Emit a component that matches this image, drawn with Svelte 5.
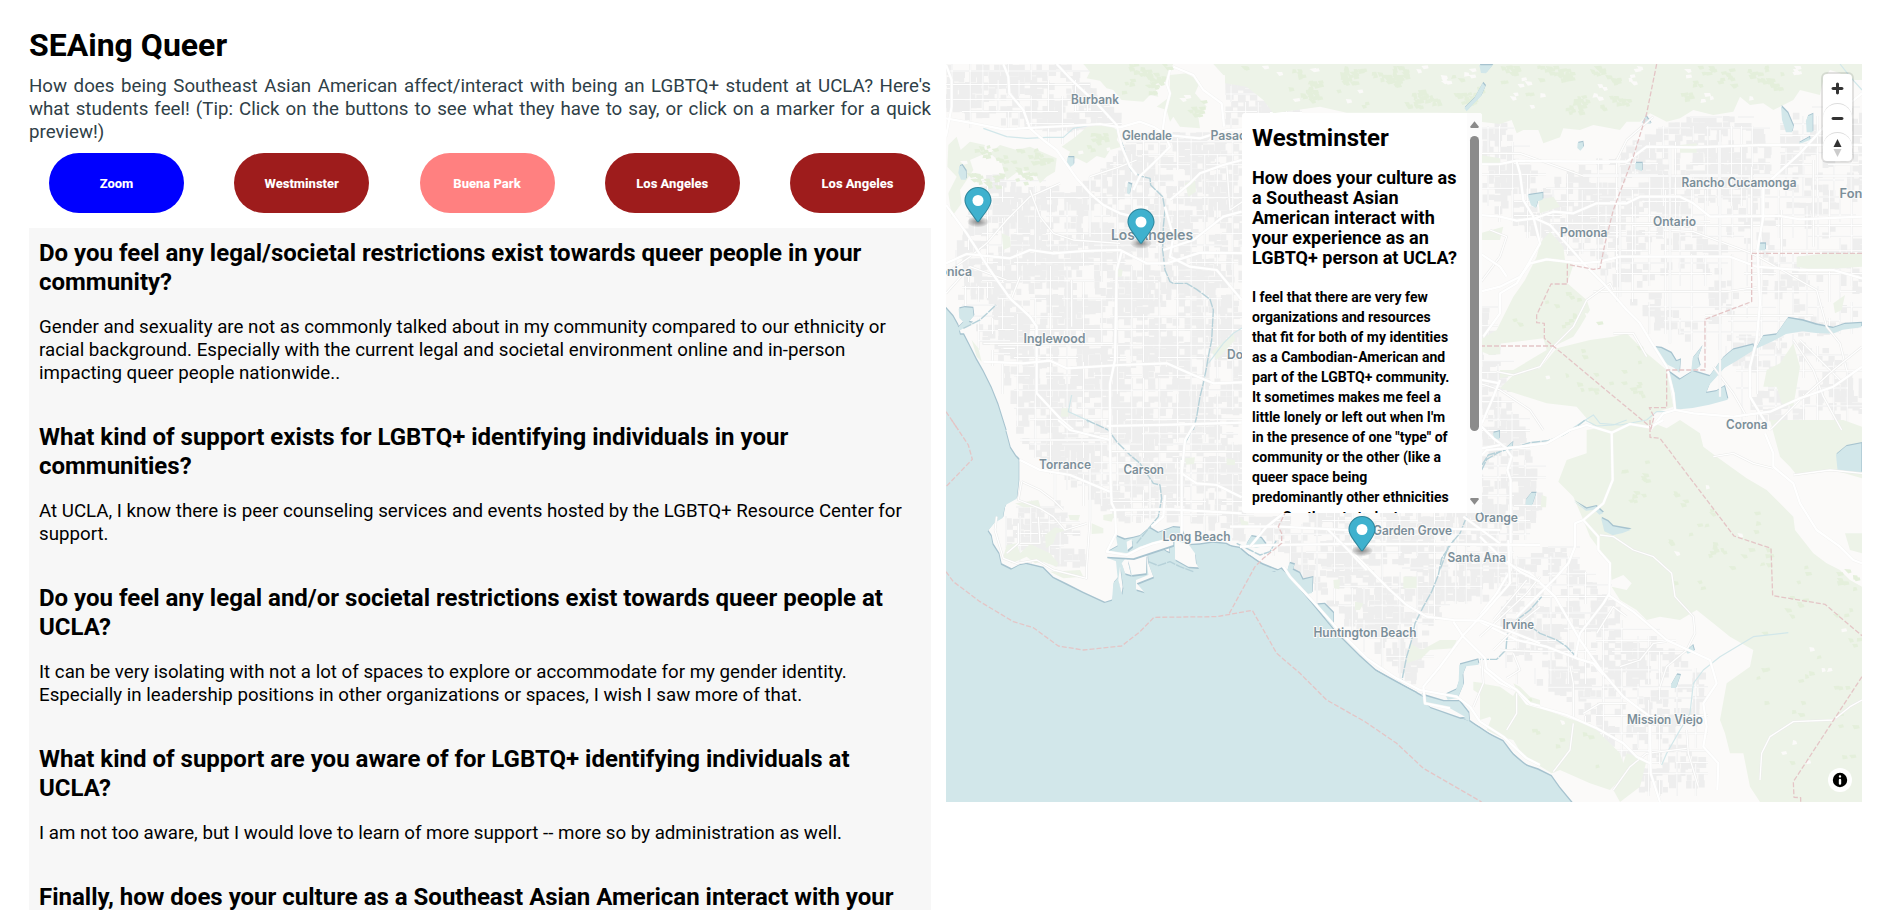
<script>
  const cities = [
    { name: 'Zoom', tone: 'zoom' },
    { name: 'Westminster', tone: 'dark' },
    { name: 'Buena Park', tone: 'light' },
    { name: 'Los Angeles', tone: 'dark' },
    { name: 'Los Angeles', tone: 'dark' }
  ];

  const answers = [
    {
      q: 'Do you feel any legal/societal restrictions exist towards queer people in your community?',
      a: 'Gender and sexuality are not as commonly talked about in my community compared to our ethnicity or racial background. Especially with the current legal and societal environment online and in-person impacting queer people nationwide..'
    },
    {
      q: 'What kind of support exists for LGBTQ+ identifying individuals in your communities?',
      a: 'At UCLA, I know there is peer counseling services and events hosted by the LGBTQ+ Resource Center for support.'
    },
    {
      q: 'Do you feel any legal and/or societal restrictions exist towards queer people at UCLA?',
      a: 'It can be very isolating with not a lot of spaces to explore or accommodate for my gender identity. Especially in leadership positions in other organizations or spaces, I wish I saw more of that.'
    },
    {
      q: 'What kind of support are you aware of for LGBTQ+ identifying individuals at UCLA?',
      a: 'I am not too aware, but I would love to learn of more support -- more so by administration as well.'
    },
    {
      q: 'Finally, how does your culture as a Southeast Asian American interact with your experience as an LGBTQ+ person at UCLA?',
      a: ''
    }
  ];

  const labels = [
    ['Burbank', 1071, 103.6, 48],
    ['Glendale', 1122, 140.2, 50],
    ['Pasadena', 1210.5, 139.6, 58],
    ['Los Angeles', 1111, 240.2, 82],
    ['Santa Monica', 891, 275.5, 81],
    ['Inglewood', 1023.5, 342.7, 62],
    ['Downey', 1227, 359, 47],
    ['Torrance', 1039, 468.9, 52],
    ['Carson', 1123.5, 474.2, 40.5],
    ['Long Beach', 1162.5, 541.2, 68],
    ['Garden Grove', 1373, 535.2, 79],
    ['Orange', 1475, 522, 43],
    ['Santa Ana', 1447.5, 561.9, 58.5],
    ['Irvine', 1502.5, 629.2, 31.5],
    ['Huntington Beach', 1313.5, 637.2, 103],
    ['Mission Viejo', 1627, 723.5, 76],
    ['Corona', 1726, 428.7, 41.5],
    ['Ontario', 1653, 226.3, 43],
    ['Pomona', 1560, 237.3, 47.5],
    ['Rancho Cucamonga', 1681.5, 186.7, 115],
    ['Fontana', 1839.5, 198.3, 50]
  ];

  const markers = [[978, 187], [1141, 208.5], [1362, 516]];

  // Built-up areas, each with the share of its cells that is filled.
  const urban = [
    [0.72, [[946, 64], [1070, 64], [1120, 118], [1100, 130], [1040, 130], [1000, 118], [946, 110]]],
    [0.7, [[985, 170], [1070, 190], [1110, 155], [1140, 130], [1242, 130], [1300, 90], [1242, 300], [1242, 540], [1200, 520], [1120, 520], [1020, 440], [1000, 370], [990, 300], [950, 250]]],
    [0.75, [[1225, 70], [1245, 75], [1276, 110], [1225, 124]]],
    [0.66, [[1482, 125], [1500, 120], [1540, 180], [1660, 125], [1700, 110], [1760, 120], [1770, 180], [1760, 200], [1690, 195], [1650, 240], [1620, 260], [1560, 250], [1482, 200]]],
    [0.5, [[1780, 110], [1862, 100], [1862, 185], [1780, 185]]],
    [0.24, [[1600, 190], [1862, 190], [1862, 330], [1720, 340], [1660, 330], [1600, 270]]],
    [0.72, [[1242, 510], [1300, 513], [1482, 300], [1520, 430], [1540, 500], [1500, 570], [1480, 600], [1440, 600], [1410, 680], [1330, 610]]],
    [0.45, [[1500, 560], [1560, 540], [1610, 600], [1700, 670], [1700, 780], [1640, 790], [1570, 700], [1500, 660]]],
    [0.66, [[1000, 515], [1030, 500], [1060, 500], [1085, 560], [1060, 563], [1005, 545]]],
    [0.35, [[1720, 330], [1800, 340], [1862, 360], [1862, 420], [1740, 420]]],
    [0.3, [[946, 270], [985, 280], [1010, 360], [990, 360], [958, 320]]]
  ];

  // Hill country, speckled with denser wood and bare clearings.
  const hills = [
    [0.7, [[1100, 64], [1170, 64], [1150, 95], [1110, 90]]],
    [0.6, [[1170, 80], [1200, 85], [1200, 120], [1180, 120]]],
    [0.6, [[1070, 135], [1110, 130], [1115, 150], [1080, 158]]],
    [0.5, [[950, 140], [1050, 150], [1040, 180], [960, 190]]],
    [0.8, [[1240, 66], [1480, 66], [1640, 66], [1620, 112], [1540, 118], [1482, 108], [1300, 108]]],
    [0.6, [[1660, 66], [1810, 66], [1780, 95], [1680, 108]]],
    [0.12, [[1620, 450], [1660, 440], [1860, 580], [1860, 790], [1760, 780], [1750, 640], [1620, 560]]],
    [0.2, [[1500, 330], [1550, 280], [1640, 340], [1660, 400], [1560, 400]]],
    [0.3, [[1510, 690], [1590, 730], [1600, 770], [1540, 750]]]
  ];

  function inside(x, y, poly) {
    let hit = false;
    for (let i = 0, j = poly.length - 1; i < poly.length; j = i++) {
      const [xi, yi] = poly[i];
      const [xj, yj] = poly[j];
      if (yi > y !== yj > y && x < ((xj - xi) * (y - yi)) / (yj - yi) + xi) hit = !hit;
    }
    return hit;
  }

  let seed = 41;
  function rand() {
    seed = (seed * 16807) % 2147483647;
    return seed / 2147483647;
  }

  function box(poly) {
    const xs = poly.map((p) => p[0]);
    const ys = poly.map((p) => p[1]);
    return [Math.min(...xs), Math.max(...xs), Math.min(...ys), Math.max(...ys)];
  }

  let blocks = '';
  let streets = '';
  for (const [density, poly] of urban) {
    const [left, right, top, bottom] = box(poly);
    for (let y = top; y < bottom; y += 6) {
      for (let x = left; x < right; x += 6) {
        if (!inside(x, y, poly)) continue;
        const drift = 0.42 * Math.sin(x / 17 + y / 41) * Math.cos(y / 14 - x / 37);
        if (rand() < density + drift) {
          const w = 5 + rand() * 3;
          const h = 5 + rand() * 3;
          blocks += `M${(x + rand()).toFixed(1)} ${(y + rand()).toFixed(1)}h${w.toFixed(1)}v${h.toFixed(1)}h-${w.toFixed(1)}z`;
        }
      }
    }
    for (let y = top + 7; y < bottom; y += 10 + rand() * 9) {
      for (let x = left; x < right; x += 16) {
        if (inside(x, y, poly) && rand() < 0.8) streets += `M${x} ${y.toFixed(1)}h16`;
      }
    }
    for (let x = left + 6; x < right; x += 10 + rand() * 9) {
      for (let y = top; y < bottom; y += 16) {
        if (inside(x, y, poly) && rand() < 0.8) streets += `M${x.toFixed(1)} ${y}v16`;
      }
    }
  }

  let woods = '';
  let clearings = '';
  for (const [cover, poly] of hills) {
    const [left, right, top, bottom] = box(poly);
    for (let y = top; y < bottom; y += 3) {
      for (let x = left; x < right; x += 4) {
        if (!inside(x, y, poly)) continue;
        const n =
          0.6 * Math.sin(x / 13 + 2 * Math.sin(y / 17)) * Math.cos(y / 9 - Math.sin(x / 23) * 2) +
          0.4 * Math.sin(x / 5 - y / 8) * Math.cos(y / 4 + x / 31);
        const cell = `M${(x + rand() * 2).toFixed(1)} ${y.toFixed(1)}l${(3 + rand() * 4).toFixed(1)} ${(rand() * 2 - 1).toFixed(1)}l1 3l-${(3 + rand() * 3).toFixed(1)} 1z`;
        if (n > 0.3 && rand() < cover) woods += cell;
        else if (n < -0.62 && rand() < cover * 0.5) clearings += cell;
      }
    }
  }

  // Map sheets: an origin and the shapes drawn on it at three units to the pixel.
  const sheets = [
    {
      x: 940, y: 50,
      parks: [
        '430,42 700,42 690,60 675,95 640,100 655,140 630,135 610,155 545,150 520,120 500,115 480,92 440,85 450,65',
        '690,75 740,70 780,95 765,130 800,170 775,200 780,235 720,230 700,200 690,215 680,180 650,170 690,140',
        '405,262 440,232 500,222 540,245 530,270 545,290 510,300 495,325 470,318 440,340 410,325 380,330 390,305 365,290',
        '820,42 960,42 960,90 920,110 890,80 850,75',
        '25,285 50,260 62,300 90,275 135,285 125,315 90,330 100,360 60,420 65,460 35,500 25,430 50,380 22,350',
        '150,310 180,285 230,300 270,290 350,325 345,365 320,380 300,400 285,370 240,360 200,390 185,340',
        '735,400 765,390 768,425 745,440', '185,550 210,560 212,590 190,600', '530,655 548,660 545,680 528,680',
        '95,870 115,895 125,935 110,920', '365,1075 385,1075 385,1100 362,1100', '815,905 880,850 885,870 830,930'
      ],
      water: [
        '18,770 40,795 55,822 62,850 72,850 90,885 110,925 130,960 155,1010 175,1060 200,1140 18,1140',
        '58,772 75,768 100,770 103,795 88,812 100,815 60,838 52,832 72,812 60,800',
        '60,345 68,342 80,360 80,385 65,385 57,365', '385,318 403,318 403,340 388,350 383,335', '565,395 577,400 570,430 563,425'
      ],
      rivers: [
        '530,235 540,265 550,290 565,345 575,362 600,378 630,385 632,405 668,440 675,480 670,530 668,600 675,660 690,695 700,700 740,700 770,718 810,748 820,780 815,870 805,920 800,950 790,1000 780,1040 770,1100 760,1140',
        '70,835 120,810 168,765'
      ],
      creeks: ['130,235 200,260 260,265 320,262 370,262 400,235 440,228', '395,1035 385,1085 440,1110 445,1118', '930,820 880,850 850,880 805,940'],
      highways: [
        '190,42 205,80 208,130 250,180 270,235 310,270 350,300 410,385 450,430 490,465 540,490 600,505',
        '350,42 400,95 470,160 530,225 545,290 570,350 590,375',
        '18,205 100,220 190,238 380,228 480,222 540,232 600,215 640,230 680,255 780,265 860,240 960,235',
        '690,60 680,100 690,130 675,190 668,240 690,290 640,340 600,378 580,420',
        '700,50 760,75 790,120 845,160 852,230',
        '18,45 35,90 35,170 18,260',
        '18,640 80,612 160,620 210,625 270,600 340,610 430,603 540,600 620,640 680,640 780,608 960,610',
        '18,465 80,550 150,660 210,745 270,800 290,830 290,1030 365,1110 400,1140',
        '545,605 530,660 525,930 510,1000 510,1140',
        '130,935 250,940 330,932 380,955 540,945 680,940 760,975 820,1000 960,995',
        '675,470 700,560 690,620 750,650 830,660 880,720 905,750',
        '690,450 750,400 780,370 850,345 905,330', '670,600 760,570 850,500 905,485'
      ],
      lanes: [
        '18,670 90,620 140,580 200,510 270,440 360,400', '270,420 300,500 340,550 400,570 540,580', '450,380 450,560', '450,380 540,350 590,330', '395,690 395,830', '18,730 90,650 200,690',
        '130,880 520,880', '190,895 225,895', '240,680 215,745', '860,340 870,480 960,420'
      ]
    },
    {
      x: 940, y: 420,
      parks: [
        '200,375 230,370 240,400 270,372 330,400 355,430 350,440 310,425 285,430 260,410 215,430 190,410',
        '345,322 315,345 318,385 340,370 350,340 380,330', '455,310 490,325 490,340 455,342', '490,285 525,280 515,305 490,300',
        '225,250 295,240 302,262 250,262', '330,455 420,450 430,470 370,475', '735,115 765,112 762,132 738,134', '860,115 885,120 885,135 860,135',
        '385,285 420,285 415,302 390,300', '900,300 925,305 925,320 905,318'
      ],
      water: [
        '0,-30 178,-30 188,0 200,35 212,80 228,105 238,115 238,180 232,232 200,250 195,262 190,290 165,305 145,330 155,345 160,370 178,398 185,430 215,445 240,432 260,428 310,440 340,470 380,490 430,515 495,545 518,538 522,485 535,470 530,420 505,410 508,390 535,375 530,345 555,355 580,350 600,345 630,320 655,335 700,318 725,320 745,372 780,370 820,364 860,368 900,390 935,408 960,425 960,1146 0,1146'
      ],
      land: [
        '560,365 575,358 577,378 562,390',
        '600,390 685,368 688,395 680,392 660,378 622,400 625,430 640,470 590,490 612,515 588,508 588,480 625,465 620,420 600,405 570,410 565,430 573,465 555,460 545,430 560,410',
        '560,410 600,398 620,405 618,460 575,465 570,440',
        '705,362 745,372 765,400 768,430 775,442 745,440 705,418', '540,440 548,500 545,520 535,480', '500,395 570,400 600,380 700,355 700,375 580,415 500,410'
      ],
      rivers: ['765,10 735,70 725,130 725,330', '440,0 505,30 530,65 570,105 600,130 640,190 660,195 665,235 655,290 610,345 590,370', '625,425 655,437 690,425 720,440 760,455'],
      creeks: [],
      highways: [
        '510,0 510,60 512,190 515,250 525,270 528,340 500,395 560,405 600,385 640,370 700,355',
        '355,0 390,30 510,60', '500,18 700,14 905,8',
        '765,10 735,60 725,160 770,190 830,195 905,232', '725,120 725,340',
        '240,120 300,150 390,165 510,215', '510,270 690,268 905,280', '675,225 670,290 635,320'
      ],
      lanes: [
        '245,185 300,210 340,240 370,270', '170,290 165,330 190,415 230,430 290,420 340,450 440,475 440,440 450,300', '245,185 235,240 300,265 340,290 375,330 440,310',
        '450,100 450,300', '345,160 345,240', '240,60 500,60', '235,310 235,370 200,400', '295,290 300,370 240,370', '630,300 630,180', '510,95 900,95'
      ]
    },
    {
      x: 1480, y: 50,
      parks: [
        '-765,42 1146,42 1146,90 1110,90 1080,70 1050,60 1030,90 1020,135 960,120 940,150 880,180 850,160 810,165 780,140 760,185 700,195 640,180 600,205 560,215 510,190 480,215 440,215 420,240 340,225 300,240 250,235 240,262 190,280 175,240 130,240 110,250 95,210 60,222 0,215 0,190 -130,188 -400,188 -480,170 -620,190 -650,150 -700,110 -765,100',
        '210,545 250,590 255,630 280,645 262,700 320,750 330,780 300,830 280,860 240,880 220,890 170,960 60,985 60,960 100,960 200,900 190,865 0,888 0,870 50,840 100,740 135,690 170,620 180,580',
        '400,860 440,850 500,910 560,960 580,1070 520,1090 510,1140 350,1140 290,1070 200,1060 60,1015 100,975 180,955 230,895 330,870',
        '950,620 1040,610 1146,610 1146,650 1000,660 950,650', '900,940 940,880 960,950 940,1070 905,1060 890,1010 850,1010 860,960',
        '175,450 220,440 240,470 180,490', '0,550 70,530 60,570 0,570', '600,285 650,280 650,308 600,308', '1060,760 1095,735 1085,780 1065,790',
        '0,315 60,325 60,340 0,345'
      ],
      water: [
        '525,888 545,890 575,905 590,930 603,925 600,965 585,950 565,940 545,920', '635,965 640,920 668,885 655,920 662,945',
        '565,960 600,985 640,960 690,975 730,920 760,895 820,880 825,895 770,930 735,950 690,1000 680,1025 710,1020 735,1005 745,1045 690,1060 640,1070 585,1075 580,1030',
        '830,892 850,855 890,850 925,800 970,808 1010,820 1060,830 1095,818 1146,815 1146,828 1090,835 1060,847 1010,845 970,840 920,848 880,870',
        '905,165 925,185 942,225 938,243 920,243 908,205', '985,195 1000,188 1000,243 982,243 980,210', '958,275 990,257 992,266 960,278',
        '295,275 310,272 312,288 303,298 294,290', '145,432 190,425 190,445 175,450 170,470 155,462', '468,335 488,335 488,360 468,352',
        '840,577 858,577 858,597 840,597', '487,215 500,195 515,218', '0,42 40,42 20,66 5,65', '-45,170 -15,140 10,95 18,105 5,135 -20,160 -38,180'
      ],
      rivers: [],
      creeks: ['1080,42 1110,80 1146,120', '280,1133 340,1095 360,1120 420,1125 500,1110 530,1085 575,1085'],
      highways: [
        '0,343 60,342 110,332 250,334 440,335 500,290 640,292 840,285 1146,285',
        '0,495 60,500 110,512 165,505 220,485 280,490 350,460 440,460 480,440 600,440 640,460 690,500 900,498 960,508 1146,500',
        '110,335 120,370 130,450 160,500 180,580 140,650 110,700 60,730 60,790 10,860',
        '0,725 60,710 120,680 150,640 200,628 300,640 360,635 420,620 750,620 830,650 960,660 1060,660 1146,685',
        '165,505 210,525 320,650 370,700 440,780 480,820 510,870 560,950 580,1030 585,1080 640,1090 760,1100',
        '1146,130 1060,200 960,310 850,410 850,500 832,600 840,760 830,870 810,950 810,1040 840,1090 870,1140',
        '760,1100 870,1085 960,1045 1060,1010 1146,950', '0,610 60,650 80,680', '510,1140 550,1090 585,1080'
      ],
      lanes: [
        '0,310 120,310 310,378 815,378 1146,378', '550,540 640,545 815,610 870,640 1010,720 1040,830 1080,880 1100,960', '420,350 420,740', '570,290 570,880', '210,520 520,520 690,515',
        '340,725 740,725 830,712', '675,797 830,797 1000,797', '815,350 815,610', '1000,330 1000,590', '0,700 60,620 80,560 30,540', '320,750 280,830 220,890 180,950 100,975 50,965',
        '905,480 905,620', '940,870 1000,960 1030,1040 1085,1140', '960,870 1080,990', '700,950 760,1030 800,1100', '870,1140 960,1050 1060,960 1146,890', '520,200 440,270 410,330',
        '320,750 390,700 400,720', '400,850 460,850 500,920', '0,1000 60,1020 150,1080 190,1140', '720,240 720,1040'
      ]
    },
    {
      x: 1480, y: 420,
      parks: [
        '320,30 380,20 440,30 510,5 560,25 600,0 660,40 670,80 710,110 800,175 860,210 940,290 945,330 1000,400 1040,430 1080,450 1110,480 1146,500 1146,1146 840,1146 810,1100 800,1050 790,1000 750,1000 735,940 720,900 740,790 810,740 820,690 750,650 700,610 650,570 600,600 540,590 500,600 470,570 420,540 395,500 440,510 455,490 430,465 395,480 390,430 360,390 330,350 310,300 280,230 235,185 260,120 320,100',
        '870,0 1090,0 1146,20 1146,175 1060,150 950,165 930,140 900,110',
        '0,790 60,800 130,850 200,870 280,900 330,910 380,960 420,1000 440,1060 390,1110 330,1090 240,1050 215,1060 150,1020 120,1000 110,920 60,930 30,890 0,900',
        '440,1000 500,1020 480,1100 420,1146 400,1110', '185,225 200,230 198,262 182,262', '1095,340 1146,340 1146,400 1110,390'
      ],
      water: [
        '0,920 60,960 95,995 130,1030 175,1045 215,1065 240,1100 278,1146 -900,1146 -900,700 -400,700',
        '365,290 385,300 400,315 455,325 430,335 400,342 375,330', '282,240 320,262 350,255 372,275 360,280 345,265 320,268',
        '1070,100 1100,75 1146,66 1146,155 1100,153 1075,150', '140,235 155,215 170,215 158,252 138,250', '575,790 592,760 603,762 590,800 575,800',
        '620,690 640,672 645,690 625,697', '42,35 58,35 60,50 45,52', '80,80 100,62 98,85 84,90'
      ],
      rivers: ['5,150 20,118 60,95 110,80 150,68 205,62 250,45 290,20 315,0', '110,600 150,570 185,530', '125,600 180,640 230,660 260,680 290,712', '0,718 50,718 78,690 82,640'],
      creeks: ['315,0 350,18 400,15 440,0', '925,638 820,650 770,680 720,710 670,750 640,790 630,880 600,930 560,1000 545,1035'],
      highways: [
        '0,110 20,90 80,85 200,70 270,30 320,15 395,38 450,12 510,22 550,0',
        '395,35 398,180 370,250 310,300 285,310 285,380 265,430 230,470 190,510 110,590',
        '310,300 355,350 355,390 390,430 388,520 370,550 300,640 285,715',
        '80,90 95,110 82,150 92,180 92,450 50,520 0,585', '0,350 80,430 150,460 225,530 300,660 370,760 430,830 510,890 512,1060 540,1146',
        '385,525 460,575 560,660 690,720 710,790 670,850 680,920 670,980 715,1030 712,1110',
        '0,605 110,660 200,680 290,715 340,730 370,765', '0,740 60,790 110,810 140,850 260,885 350,925 430,970 470,1010 510,1030',
        '855,40 880,100 880,140 940,190 960,250 1010,330 1080,380 1120,420 1146,430', '0,15 40,55 80,85'
      ],
      lanes: [
        '360,345 400,350 460,390 520,410 575,460 585,530 640,590 645,640 620,690', '840,1080 845,1000 870,950 940,905 1060,900 1110,860 1146,840',
        '700,110 760,100 820,130 880,145', '940,165 1050,150 1146,160', '310,880 360,850 440,850', '350,640 400,560 440,590', '420,740 480,720 520,670 560,665',
        '540,800 560,740 620,690', '280,900 280,790 270,740', '220,1055 270,990 280,910', '620,930 625,1000 655,1100', '400,1110 450,1040 500,1000 620,985'
      ]
    },
    {
      x: 1240, y: 540,
      parks: ['490,110 530,110 530,145 490,145', '510,310 545,330 600,300 650,300 640,325 570,330 545,355 500,370', '700,425 735,430 730,470 700,450', '345,185 370,190 360,210 345,210', '280,120 300,118 298,148 282,145', '820,430 840,440 870,470 900,480 900,680 850,650 820,600 780,590 740,570 760,520 800,500 830,450'],
      water: ['0,35 30,45 60,68 85,85 105,92 125,82 145,100 220,190 290,275 360,345 410,390 470,425 530,455 545,480 560,497 620,515 690,540 740,575 790,600 820,640 850,665 870,680 900,690 900,786 -400,786 -400,200 0,200',
        '232,190 255,188 282,215 282,258 265,240', '140,100 150,65 165,70 160,85 180,95 190,115 220,108 218,155 205,158 180,130 160,118',
        '618,460 650,445 658,420 660,370 715,355 718,370 680,375 670,400 672,430 655,470 625,475', '545,460 612,480 660,480 688,515 690,540 620,510 575,492'
      ],
      land: ['560,490 630,505 675,530 660,532 570,500'],
      rivers: ['642,0 605,55 595,105 575,155 550,200 525,250 515,300 500,350 485,425', '-10,10 30,30 60,45 90,35 110,0'],
      creeks: [],
      highways: [
        '290,0 340,40 400,100 450,150 500,195 560,230 640,240 725,242 800,270 900,310', '640,245 670,290 735,355 740,385 790,425 830,450 870,490 900,498',
        '670,285 600,380 550,440 555,490 630,505', '130,80 150,110 220,185 300,275 380,355 470,415 540,450 650,470 690,500 720,545 790,590 860,655 900,675',
        '670,285 740,210 810,130 805,0', '0,20 90,15 300,12 560,12 900,15', '800,65 840,95 900,125'
      ],
      lanes: ['725,355 730,430 700,500', '820,340 840,390 800,415', '720,290 860,160 900,110', '760,240 860,120', '780,330 900,335', '830,460 830,520 800,570', '760,330 850,240 900,200']
    },
    {
      x: 1230, y: 330,
      parks: ['756,30 810,30 810,72 780,75 756,65', '30,560 60,590 40,595'],
      water: ['50,640 65,615 95,620 110,640 100,645 80,650', '790,305 810,300 810,325 795,320', '0,645 30,650 70,685 100,700 150,720 0,720'],
      rivers: ['710,560 690,610 655,650 630,720', '756,405 775,375 810,365'],
      creeks: [],
      highways: ['0,590 150,590 350,600 600,595 810,600', '290,595 340,645 410,720', '60,650 110,590 160,550', '700,560 810,640', '756,355 810,345', '756,150 810,160', '756,280 790,200 810,150']
    }
  ];

  const borders = [
    [1480, 50, '530,42 500,190 460,320 400,480 375,580 360,655 340,658 262,643 262,702 213,702 170,795 170,818 193,820 193,865 222,890 510,1130'],
    [1480, 50, '0,888 222,888'],
    [1480, 50, '1146,610 815,610 815,755 675,808 675,960 560,960 560,1073 508,1073 522,1100 512,1140'],
    [1480, 420, '510,0 510,52 540,55 650,200 762,348 873,385 878,527 1035,553 1146,647'],
    [1480, 420, '1146,770 940,1085 942,1132 962,1133 962,1146'],
    [940, 50, '18,1085 55,1140'],
    [940, 420, '35,0 85,75 97,118 18,200'],
    [940, 420, '18,455 40,485 120,545 220,605 280,623 355,678 430,690 545,678 600,635 642,592 830,590 937,571 1010,700 1080,760 1160,840 1275,905 1370,970 1450,1045 1625,1146'],
    [940, 420, '868,580 945,440 970,415 1025,370 1025,340 1015,320 1035,280']
  ];
</script>

<main>
  <section class="story">
    <h1>SEAing Queer</h1>
    <p class="intro">
      How does being Southeast Asian American affect/interact with being an LGBTQ+ student at UCLA? Here's what students feel! (Tip: Click on the buttons to see what they have to say, or click on a marker for a quick preview!)
    </p>
    <nav>
      {#each cities as city}
        <button class="city {city.tone}">{city.name}</button>
      {/each}
    </nav>
    <div class="answers">
      {#each answers as item}
        <h2>{item.q}</h2>
        <p>{item.a}</p>
      {/each}
    </div>
  </section>

  <section class="map">
    <svg class="canvas" viewBox="946 64 916 738" width="916" height="738" aria-hidden="true">
      <rect x="946" y="64" width="916" height="738" fill="#fbfaf9" />
      <path class="blocks" d={blocks} />
      <path class="street-edge" d={streets} />
      <path class="street" d={streets} />
      {#each sheets as s}
        <g transform="translate({s.x} {s.y}) scale(0.33333)">
          {#each s.parks as p}<polygon class="park" points={p} />{/each}
        </g>
      {/each}
      <path class="woods" d={woods} />
      <path class="land" d={clearings} />
      {#each sheets as s}
        <g transform="translate({s.x} {s.y}) scale(0.33333)">
          {#each s.water as p}<polygon class="shore" points={p} />{/each}
        </g>
      {/each}
      {#each sheets as s}
        <g transform="translate({s.x} {s.y}) scale(0.33333)">
          {#each s.water as p}<polygon class="water" points={p} transform="translate(-2 4)" />{/each}
        </g>
      {/each}
      {#each sheets as s}
        <g transform="translate({s.x} {s.y}) scale(0.33333)">
          {#each s.land ?? [] as p}
            <polygon class="shore" points={p} transform="translate(2 5)" />
            <polygon class="land" points={p} />
          {/each}
          {#each s.creeks as p}<polyline class="creek" points={p} />{/each}
          {#each s.rivers as p}<polyline class="river" points={p} />{/each}
        </g>
      {/each}
      {#each sheets as s}
        <g transform="translate({s.x} {s.y}) scale(0.33333)">
          {#each s.lanes ?? [] as p}
            <polyline class="lane-edge" points={p} />
            <polyline class="lane" points={p} />
          {/each}
          {#each s.highways as p}<polyline class="highway-edge" points={p} />{/each}
          {#each s.highways as p}<polyline class="highway" points={p} />{/each}
        </g>
      {/each}
      {#each borders as [x, y, p]}
        <polyline class="border" points={p} transform="translate({x} {y}) scale(0.33333)" />
      {/each}
      {#each labels as [name, x, y, w]}
        <text {x} {y} textLength={w} lengthAdjust="spacingAndGlyphs" class:major={name === 'Los Angeles'}>{name}</text>
      {/each}
      <defs>
        <radialGradient id="pin-shadow">
          <stop offset="10%" stop-opacity="0.4" />
          <stop offset="100%" stop-opacity="0.05" />
        </radialGradient>
      </defs>
      {#each markers as [x, y]}
        <g transform="translate({x - 13.5} {y})">
          <ellipse cx="13.5" cy="34.8" rx="10.5" ry="5.25" fill="url(#pin-shadow)" />
          <path fill="#3fb1ce" d="M27,13.5C27,19.07 20.25,27 14.75,34.5C14.02,35.5 12.98,35.5 12.25,34.5C6.75,27 0,19.22 0,13.5C0,6.04 6.04,0 13.5,0C20.96,0 27,6.04 27,13.5Z" />
          <path opacity="0.25" d="M13.5,0C6.04,0 0,6.04 0,13.5C0,19.22 6.75,27 12.25,34.5C13,35.52 14.02,35.5 14.75,34.5C20.25,27 27,19.07 27,13.5C27,6.04 20.96,0 13.5,0ZM13.5,1C20.42,1 26,6.58 26,13.5C26,15.9 24.5,19.18 22.22,22.74C19.95,26.3 16.71,30.14 13.94,33.91C13.74,34.18 13.61,34.32 13.5,34.44C13.39,34.32 13.26,34.18 13.06,33.91C10.28,30.13 7.41,26.31 5.02,22.77C2.62,19.23 1,15.95 1,13.5C1,6.58 6.58,1 13.5,1Z" />
          <circle fill="white" cx="13.5" cy="13.5" r="5.5" />
        </g>
      {/each}
    </svg>

    <div class="popup">
      <div class="popup-text">
        <h3>Westminster</h3>
        <h4>How does your culture as a Southeast Asian American interact with your experience as an LGBTQ+ person at UCLA?</h4>
        <p>I feel that there are very few organizations and resources that fit for both of my identities as a Cambodian-American and part of the LGBTQ+ community. It sometimes makes me feel a little lonely or left out when I'm in the presence of one "type" of community or the other (like a queer space being predominantly other ethnicities over Southeast students</p>
      </div>
      <div class="scrollbar">
        <svg width="9" height="7" viewBox="0 0 9 7"><path d="M4.5 0.2 8.7 5.6Q8.9 7 8 7H1Q0.1 7 0.3 5.6Z" fill="#8b8b8b" /></svg>
        <div class="thumb"></div>
        <svg class="down" width="9" height="7" viewBox="0 0 9 7"><path d="M4.5 6.8 8.7 1.4Q8.9 0 8 0H1Q0.1 0 0.3 1.4Z" fill="#8b8b8b" /></svg>
      </div>
    </div>

    <div class="controls">
      <button aria-label="Zoom in"><svg viewBox="0 0 29 29"><path fill="#333" d="M14.5 8.5c-.75 0-1.5.75-1.5 1.5v3h-3c-.75 0-1.5.75-1.5 1.5S9.25 16 10 16h3v3c0 .75.75 1.5 1.5 1.5S16 19.75 16 19v-3h3c.75 0 1.5-.75 1.5-1.5S19.75 13 19 13h-3v-3c0-.75-.75-1.5-1.5-1.5z" /></svg></button>
      <button aria-label="Zoom out"><svg viewBox="0 0 29 29"><path fill="#333" d="M10 13c-.75 0-1.5.75-1.5 1.5S9.25 16 10 16h9c.75 0 1.5-.75 1.5-1.5S19.75 13 19 13h-9z" /></svg></button>
      <button aria-label="Reset bearing to north"><svg viewBox="0 0 29 29"><path fill="#333" d="M10.5 14l4-8 4 8h-8z" /><path fill="#ccc" d="M10.5 16l4 8 4-8h-8z" /></svg></button>
    </div>
    <button class="info" aria-label="Toggle attribution">
      <svg width="24" height="24" viewBox="0 0 20 20" fill-rule="evenodd"><path d="M4 10a6 6 0 1 0 12 0 6 6 0 1 0-12 0m5-3a1 1 0 1 0 2 0 1 1 0 1 0-2 0m0 3a1 1 0 1 1 2 0v3a1 1 0 1 1-2 0" /></svg>
    </button>
  </section>
</main>

<style>
  :global(body) {
    overflow: hidden;
  }
  main {
    box-sizing: border-box;
    display: grid;
    grid-template-columns: 902px 916px;
    column-gap: 15px;
    height: 910px;
    padding-left: 29px;
    overflow: hidden;
    background: #fff;
    font-family: Roboto, sans-serif;
    color: #000;
  }
  .story {
    display: flex;
    flex-direction: column;
    padding-top: 26px;
  }
  h1 {
    margin: 0;
    font-size: 32px;
    line-height: 38px;
  }
  .intro {
    margin: 11px 0 9px;
    font-size: 18.72px;
    line-height: 23px;
    text-align: justify;
    color: #2f4047;
  }
  nav {
    display: flex;
    justify-content: space-between;
    padding: 0 6px 0 20px;
  }
  .city {
    width: 135px;
    height: 60px;
    padding: 0;
    border: 0;
    border-radius: 30px;
    font: 800 13px Roboto, sans-serif;
    color: #fff;
  }
  .zoom { background: #00f; }
  .dark { background: #9e1c1c; }
  .light { background: #ff8080; }
  .answers {
    margin-top: 15px;
    padding: 11px 10px 10px;
    background: #f7f7f7;
  }
  h2 {
    margin: 0 0 19px;
    font-size: 24px;
    line-height: 29px;
  }
  .answers p {
    margin: 0 0 38px;
    font-size: 18.72px;
    line-height: 23px;
  }
  .map {
    position: relative;
    margin-top: 64px;
    width: 916px;
    height: 738px;
    overflow: hidden;
  }
  .canvas {
    display: block;
  }
  .park { fill: #edf3e8; }
  .woods { fill: #e4efdb; }
  .blocks { fill: #eeeeee; }
  .street-edge { fill: none; stroke: #e9e9e9; stroke-width: 1.8; }
  .street { fill: none; stroke: #fff; stroke-width: 1; }
  .land { fill: #fbfaf9; }
  .shore { fill: #a7c3cf; }
  .water { fill: #d2e7ea; }
  .creek, .river, .highway, .highway-edge, .lane, .lane-edge, .border {
    fill: none;
    stroke-linejoin: round;
    vector-effect: non-scaling-stroke;
  }
  .creek { stroke: #d2e7ea; stroke-width: 1.2; }
  .river { stroke: #b6d1d9; stroke-width: 1.4; stroke-dasharray: 9 1; }
  .lane-edge { stroke: #ebebea; stroke-width: 2.4; }
  .lane { stroke: #fff; stroke-width: 1.3; }
  .highway-edge { stroke: #f3f3f2; stroke-width: 3; }
  .highway { stroke: #fff; stroke-width: 2.2; }
  .border { stroke: #e4c5c6; stroke-width: 1.3; stroke-dasharray: 5 2; }
  text {
    font-family: Inter, sans-serif;
    font-size: 12.5px;
    font-weight: 600;
    fill: #7b8f9a;
    stroke: #fbfaf9;
    stroke-width: 2px;
    stroke-linejoin: round;
    paint-order: stroke;
  }
  text.major { font-size: 14px; }
  .popup {
    position: absolute;
    top: 49px;
    left: 296px;
    display: flex;
    width: 240px;
    height: 400px;
    overflow: hidden;
    border-radius: 3px;
    background: #fff;
  }
  .popup-text {
    flex: 1;
    padding: 10px 9px 0 10px;
  }
  h3 {
    margin: 0;
    font-size: 24px;
    line-height: 30px;
  }
  h4 {
    margin: 15px 0 19px;
    font-size: 18px;
    line-height: 20px;
  }
  .popup p {
    margin: 0;
    font-size: 14px;
    font-weight: 700;
    line-height: 20px;
  }
  .scrollbar {
    display: flex;
    flex-direction: column;
    align-items: center;
    box-sizing: border-box;
    width: 15px;
    padding: 8px 0;
    background: #fcfcfc;
  }
  .thumb {
    width: 9px;
    height: 295px;
    margin-top: 8px;
    border-radius: 5px;
    background: #8b8b8b;
  }
  .down {
    margin-top: auto;
  }
  .controls {
    position: absolute;
    top: 10px;
    right: 10px;
    width: 29px;
    border-radius: 4px;
    background: #fff;
    box-shadow: 0 0 0 2px rgba(0, 0, 0, 0.1);
  }
  .controls button {
    display: block;
    box-sizing: border-box;
    width: 29px;
    height: 29px;
    padding: 0;
    border: 0;
    border-radius: 30px;
    background: transparent;
  }
  .controls button + button {
    border-top: 1px solid #ddd;
  }
  .controls svg {
    display: block;
    width: 29px;
    height: 29px;
  }
  .info {
    position: absolute;
    right: 10px;
    bottom: 10px;
    width: 24px;
    height: 24px;
    padding: 0;
    border: 0;
    border-radius: 12px;
    background: #fff;
  }
  .info svg {
    display: block;
  }
</style>
